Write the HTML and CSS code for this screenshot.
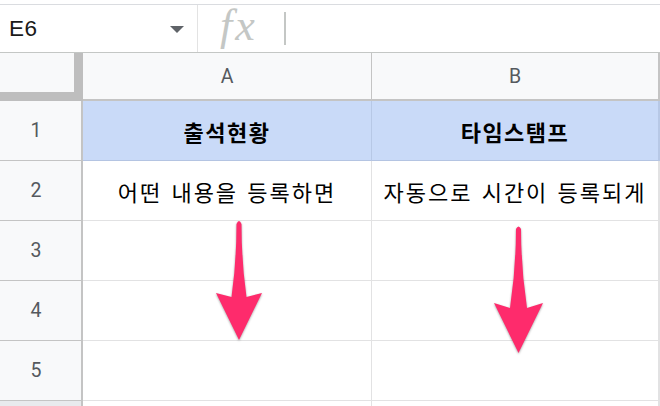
FILE: index.html
```html
<!DOCTYPE html>
<html lang="ko">
<head>
<meta charset="utf-8">
<link rel="stylesheet" href="styles.css">
</head>
<body>
<div class="topline"></div>
<div class="fbar">
  <div class="namebox"><span class="ref">E6</span><span class="caret"></span></div>
  <div class="fx-wrap"><span class="fx">fx</span><span class="div2"></span></div>
</div>
<div class="sheet">
  <div class="corner"></div>
  <div class="colhead">A</div>
  <div class="colhead last">B</div>

  <div class="rowhead">1</div>
  <div class="cell hdr">출석현황</div>
  <div class="cell hdr last">타임스탬프</div>

  <div class="rowhead">2</div>
  <div class="cell">어떤 내용을 등록하면</div>
  <div class="cell last">자동으로 시간이 등록되게</div>

  <div class="rowhead">3</div>
  <div class="cell"></div>
  <div class="cell last"></div>

  <div class="rowhead">4</div>
  <div class="cell"></div>
  <div class="cell last"></div>

  <div class="rowhead">5</div>
  <div class="cell"></div>
  <div class="cell last"></div>

  <div class="rowhead sel"></div>
  <div class="cell short"></div>
  <div class="cell short last"></div>
</div>
<svg class="arrows" width="660" height="406" viewBox="0 0 660 406">
  <path d="M246.5,297 Q241.5,262 241.5,224 Q239,218 236.5,224 Q236.5,262 231.5,297 L216,293 L239,340 L262,293 Z"/>
  <path d="M527,308 Q521,268 521,229 Q518.5,224 516,229 Q516,268 510,308 L494,303 L518.5,353 L543,303 Z"/>
</svg>
</body>
</html>
```
FILE: styles.css
```css
html, body {
  margin: 0;
  padding: 0;
  background: #ffffff;
  width: 660px;
  height: 406px;
  overflow: hidden;
  position: relative;
}
.topline {
  margin-top: 4px;
  height: 1px;
  background: #dadce0;
}
.fbar {
  display: flex;
  height: 47px;
  border-bottom: 1px solid #c4c7c5;
}
.namebox {
  width: 198px;
  border-right: 1.5px solid #e3e3e3;
  display: flex;
  align-items: center;
  justify-content: space-between;
  padding: 0 13px 0 9px;
  box-sizing: border-box;
}
.ref {
  font-family: "Liberation Sans", Arial, sans-serif;
  font-size: 22.5px;
  letter-spacing: 0.5px;
  color: #1a1a1a;
  margin-top: 1px;
}
.caret {
  width: 0;
  height: 0;
  border-left: 7.5px solid transparent;
  border-right: 7.5px solid transparent;
  border-top: 7px solid #5f6368;
  margin-top: 2px;
}
.fx-wrap {
  display: flex;
  align-items: center;
  padding-left: 22px;
}
.fx {
  width: 64px;
  font-family: "Liberation Serif", serif;
  font-style: italic;
  font-size: 44px;
  letter-spacing: 3px;
  color: #c4c7c5;
  line-height: 1;
  margin-top: -6px;
}
.div2 {
  width: 1.5px;
  height: 33px;
  background: #c4c7c5;
  margin-top: -1px;
}
.sheet {
  display: grid;
  grid-template-columns: 83px 289px 288px;
  grid-template-rows: 48px 60px 60px 60px 60px 60px 10px;
}
.corner {
  background: #f8f9fa;
  border-right: 9px solid #bebebe;
  border-bottom: 9px solid #bebebe;
}
.colhead {
  background: #f8f9fa;
  border-right: 1.5px solid #c4c4c4;
  border-bottom: 2px solid #c4c4c4;
  display: flex;
  align-items: center;
  justify-content: center;
  font-family: Roboto, "Liberation Sans", sans-serif;
  font-size: 19.5px;
  color: #55595e;
  padding-top: 1px;
}
.colhead.last {
  border-right: 2px solid #c4c4c4;
}
.rowhead {
  background: #f8f9fa;
  border-right: 2px solid #c4c4c4;
  border-bottom: 1px solid #c4c4c4;
  display: flex;
  align-items: center;
  justify-content: center;
  font-family: Roboto, "Liberation Sans", sans-serif;
  font-size: 19.5px;
  color: #55595e;
  padding-right: 9px;
}
.rowhead.sel {
  background: #e8eaed;
  border-top: 1px solid #c4c4c4;
  margin-top: -1px;
}
.cell {
  border-right: 1.5px solid #e2e2e3;
  border-bottom: 1px solid #e2e2e3;
  display: flex;
  align-items: center;
  justify-content: center;
  font-family: "Noto Sans CJK KR", sans-serif;
  font-size: 22px;
  letter-spacing: 2px;
  word-spacing: 1px;
  color: #000000;
  white-space: nowrap;
}
.cell.last {
  border-right: 2px solid #e2e2e3;
}
.cell.hdr {
  background: #c9daf8;
  font-weight: bold;
  letter-spacing: 1.5px;
  border-bottom-color: #b4c4e2;
  border-right-color: #b7c8e6;
}
.arrows {
  position: absolute;
  left: 0;
  top: 0;
  pointer-events: none;
}
.arrows path {
  fill: #fe2b6c;
  filter: drop-shadow(0.5px 1px 1px rgba(0, 0, 0, 0.35));
}
```
